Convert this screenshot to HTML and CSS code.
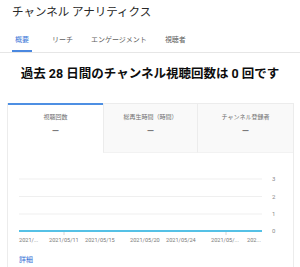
FILE: index.html
```html
<!DOCTYPE html>
<html lang="ja">
<head>
<meta charset="utf-8">
<title>チャンネル アナリティクス</title>
<link rel="stylesheet" href="styles.css">
</head>
<body>
<header class="title">チャンネル アナリティクス</header>
<nav class="tabs">
  <span class="tab active">概要</span>
  <span class="tab">リーチ</span>
  <span class="tab">エンゲージメント</span>
  <span class="tab">視聴者</span>
</nav>
<h1 class="headline">過去 28 日間のチャンネル視聴回数は 0 回です</h1>
<section class="panel">
  <div class="metrics">
    <div class="metric selected">
      <div class="metric-label">視聴回数</div>
      <div class="metric-value">—</div>
    </div>
    <div class="metric">
      <div class="metric-label">総再生時間（時間）</div>
      <div class="metric-value">—</div>
    </div>
    <div class="metric">
      <div class="metric-label">チャンネル登録者</div>
      <div class="metric-value">—</div>
    </div>
  </div>
  <div class="chart">
    <svg class="chart-svg" width="285" height="95" viewBox="0 0 285 95">
      <g class="grid">
        <line x1="11" y1="26" x2="254" y2="26"/>
        <line x1="11" y1="43.5" x2="254" y2="43.5"/>
        <line x1="11" y1="61" x2="254" y2="61"/>
      </g>
      <line class="ticks" x1="56" y1="79" x2="56" y2="82"/>
      <line class="ticks" x1="218" y1="79" x2="218" y2="82"/>
      <line class="series" x1="11" y1="78" x2="254" y2="78"/>
      <g class="ylabels">
        <text x="264" y="28">3</text>
        <text x="264" y="45.5">2</text>
        <text x="264" y="63">1</text>
        <text x="264" y="80">0</text>
      </g>
      <g class="xlabels">
        <text x="11" y="88.5">2021/...</text>
        <text x="41" y="88.5">2021/05/11</text>
        <text x="77" y="88.5">2021/05/15</text>
        <text x="122" y="88.5">2021/05/20</text>
        <text x="158" y="88.5">2021/05/24</text>
        <text x="203" y="88.5">2021/05/...</text>
        <text x="239" y="88.5">202...</text>
      </g>
    </svg>
  </div>
  <a class="more" href="#">詳細</a>
</section>
</body>
</html>
```
FILE: styles.css
```css
html, body {
  margin: 0;
  padding: 0;
  background: #ffffff;
}
body {
  font-family: Roboto, "Noto Sans CJK JP", sans-serif;
  color: #0d0d0d;
  width: 300px;
  height: 267px;
  overflow: hidden;
}
.title {
  height: 27px;
  box-sizing: border-box;
  padding: 5px 0 0 12px;
  font-size: 11.5px;
  line-height: 15px;
  color: #282828;
}
.tabs {
  display: flex;
  height: 26px;
  box-sizing: border-box;
  padding-left: 12px;
  border-bottom: 1px solid #e6e6e6;
  gap: 12px;
}
.tab {
  display: flex;
  align-items: center;
  padding: 1px 3px 0;
  font-size: 7px;
  color: #606060;
  border-bottom: 2px solid transparent;
  box-sizing: border-box;
  height: 25px;
}
.tab.active {
  color: #3b78d8;
  border-bottom-color: #4a88e0;
  margin-right: 5px;
}
.headline {
  margin: 12px 0 20px;
  font-size: 12.5px;
  line-height: 18px;
  font-weight: 700;
  text-align: center;
  color: #0d0d0d;
}
.panel {
  margin: 0 6px 0 7px;
  border-left: 1px solid #ececec;
  border-right: 1px solid #ececec;
  height: 164px;
}
.metrics {
  display: grid;
  grid-template-columns: 95px 94px 1fr;
  height: 50px;
}
.metric {
  box-sizing: border-box;
  background: #f9f9f9;
  border-top: 1px solid #ececec;
  border-left: 1px solid #ececec;
  border-bottom: 1px solid #f2f2f2;
  text-align: center;
  padding-top: 9px;
}
.metric.selected {
  background: #ffffff;
  border-top: 2px solid #4d8fe3;
  border-left: none;
  border-bottom: none;
  padding-top: 8px;
}
.metric-label {
  font-size: 6px;
  line-height: 7px;
  color: #6f6f6f;
}
.metric-value {
  margin-top: 7px;
  font-size: 9px;
  line-height: 9px;
  font-weight: 700;
  color: #7a7a7a;
}
.chart {
  height: 94px;
}
.chart-svg {
  display: block;
}
.grid line {
  stroke: #efefef;
  stroke-width: 1;
}
.ticks {
  stroke: #d6d6d6;
  stroke-width: 1;
}
.series {
  stroke: #55c1e6;
  stroke-width: 2;
}
.ylabels text {
  font-family: Roboto, "Noto Sans CJK JP", sans-serif;
  font-size: 6px;
  fill: #8a8a8a;
}
.xlabels text {
  font-family: Roboto, "Noto Sans CJK JP", sans-serif;
  font-size: 5.6px;
  fill: #7a7a7a;
}
.more {
  display: inline-block;
  margin: 0 0 0 11px;
  font-size: 7px;
  line-height: 10px;
  color: #2f6fd6;
  text-decoration: none;
}
```
